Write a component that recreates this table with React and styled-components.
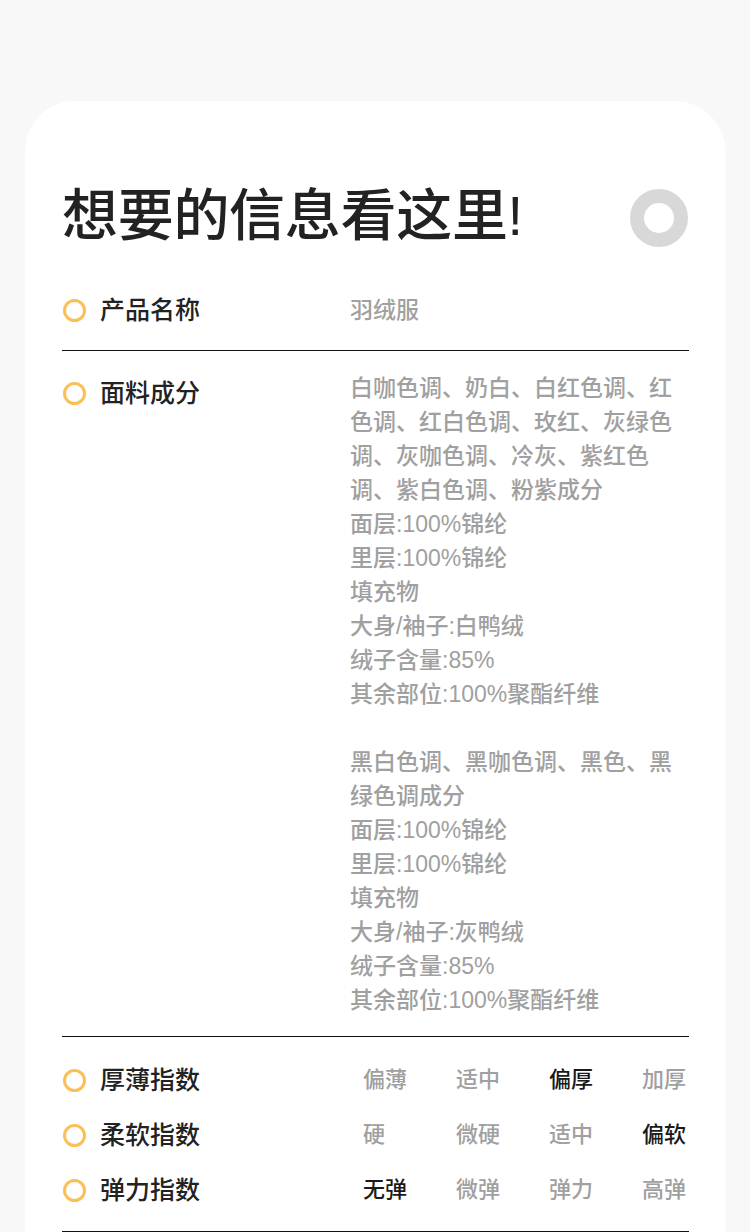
import React from "react";
import styled, { createGlobalStyle } from "styled-components";

const GlobalStyle = createGlobalStyle`
  html, body {
    margin: 0;
    padding: 0;
    background: #f8f8f8;
  }
  body {
    font-family: "Liberation Sans", "Noto Sans CJK SC", sans-serif;
  }
`;

const Page = styled.div`
  width: 750px;
  min-height: 1232px;
  padding-top: 101px;
  box-sizing: border-box;
  background: #f8f8f8;
  overflow: hidden;
`;

const Card = styled.div`
  margin: 0 25px;
  background: #ffffff;
  border-radius: 50px 50px 0 0;
  padding: 80px 36px 0 37px;
  min-height: 1131px;
  box-sizing: border-box;
`;

const Header = styled.div`
  display: flex;
  justify-content: space-between;
  align-items: center;
  margin-bottom: 42px;
`;

const Title = styled.h1`
  margin: 0;
  font-size: 56px;
  line-height: 70px;
  font-weight: 500;
  color: #222222;
  letter-spacing: -0.3px;
`;

const GrayRing = styled.span`
  width: 58px;
  height: 58px;
  border-radius: 50%;
  border: 14px solid #d8d8d8;
  box-sizing: border-box;
  margin: 4px 1px 0 0;
`;

const Row = styled.div`
  display: flex;
  align-items: flex-start;
  padding: ${(p) => p.$pad || "0"};
  border-bottom: 1px solid #111111;
`;

const Label = styled.div`
  display: flex;
  align-items: center;
  gap: 14px;
  width: 287px;
  flex-shrink: 0;
  margin-top: ${(p) => p.$offset || 0}px;
  padding-left: 1px;
  font-size: 25px;
  line-height: 34px;
  font-weight: 500;
  color: #222222;
`;

const Dot = styled.span`
  width: 23px;
  height: 23px;
  border-radius: 50%;
  border: 3.5px solid #fbbf57;
  box-sizing: border-box;
  flex-shrink: 0;
`;

const Value = styled.div`
  width: 340px;
  font-size: 23px;
  line-height: 34px;
  font-weight: 500;
  color: #a0a0a0;
  word-break: break-all;
`;

const Line = styled.div`
  min-height: 34px;
`;

const IndexList = styled.div`
  display: flex;
  flex-direction: column;
  gap: 21px;
  padding: 26px 0 24px;
  border-bottom: 1px solid #111111;
`;

const IndexRow = styled.div`
  display: flex;
  align-items: center;
`;

const Options = styled.div`
  display: grid;
  grid-template-columns: repeat(4, 93px);
  margin-left: 13px;
`;

const Option = styled.span`
  font-size: 22px;
  line-height: 34px;
  font-weight: 500;
  color: ${(p) => (p.$active ? "#1a1a1a" : "#a0a0a0")};
`;

const fabric = [
  "白咖色调、奶白、白红色调、红色调、红白色调、玫红、灰绿色调、灰咖色调、冷灰、紫红色调、紫白色调、粉紫成分",
  "面层:100%锦纶",
  "里层:100%锦纶",
  "填充物",
  "大身/袖子:白鸭绒",
  "绒子含量:85%",
  "其余部位:100%聚酯纤维",
  "",
  "黑白色调、黑咖色调、黑色、黑绿色调成分",
  "面层:100%锦纶",
  "里层:100%锦纶",
  "填充物",
  "大身/袖子:灰鸭绒",
  "绒子含量:85%",
  "其余部位:100%聚酯纤维",
];

const indexes = [
  { name: "厚薄指数", options: ["偏薄", "适中", "偏厚", "加厚"], active: 2 },
  { name: "柔软指数", options: ["硬", "微硬", "适中", "偏软"], active: 3 },
  { name: "弹力指数", options: ["无弹", "微弹", "弹力", "高弹"], active: 0 },
];

export default function App() {
  return (
    <Page>
      <GlobalStyle />
      <Card>
        <Header>
          <Title>想要的信息看这里!</Title>
          <GrayRing />
        </Header>

        <Row $pad="0 0 23px">
          <Label>
            <Dot />
            产品名称
          </Label>
          <Value>羽绒服</Value>
        </Row>

        <Row $pad="20px 0 19px">
          <Label $offset={5}>
            <Dot />
            面料成分
          </Label>
          <Value>
            {fabric.map((t, i) => (
              <Line key={i}>{t}</Line>
            ))}
          </Value>
        </Row>

        <IndexList>
          {indexes.map((idx) => (
            <IndexRow key={idx.name}>
              <Label>
                <Dot />
                {idx.name}
              </Label>
              <Options>
                {idx.options.map((o, i) => (
                  <Option key={o} $active={i === idx.active}>
                    {o}
                  </Option>
                ))}
              </Options>
            </IndexRow>
          ))}
        </IndexList>
      </Card>
    </Page>
  );
}
